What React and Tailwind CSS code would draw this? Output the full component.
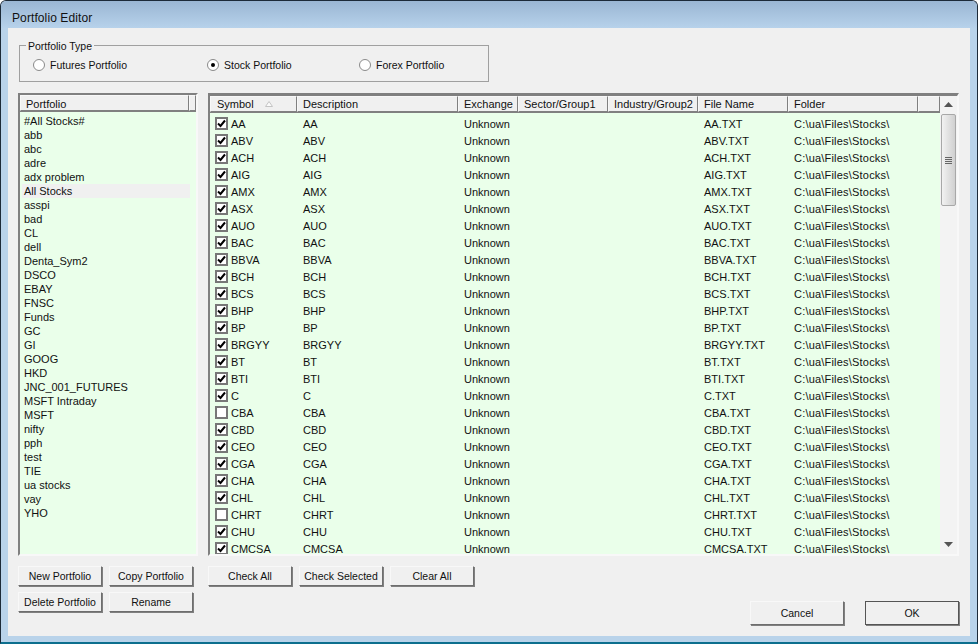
const portfolios = ['#All Stocks#', 'abb', 'abc', 'adre', 'adx problem', 'All Stocks', 'asspi', 'bad', 'CL', 'dell', 'Denta_Sym2', 'DSCO', 'EBAY', 'FNSC', 'Funds', 'GC', 'GI', 'GOOG', 'HKD', 'JNC_001_FUTURES', 'MSFT Intraday', 'MSFT', 'nifty', 'pph', 'test', 'TIE', 'ua stocks', 'vay', 'YHO'];

const symbols = ['AA', 'ABV', 'ACH', 'AIG', 'AMX', 'ASX', 'AUO', 'BAC', 'BBVA', 'BCH', 'BCS', 'BHP', 'BP', 'BRGYY', 'BT', 'BTI', 'C', 'CBA', 'CBD', 'CEO', 'CGA', 'CHA', 'CHL', 'CHRT', 'CHU', 'CMCSA'];
const unchecked = ['CBA', 'CHRT'];

const columns = [
  { label: 'Symbol', width: 'w-[87px] pl-[6px]' },
  { label: 'Description', width: 'w-[161px] pl-[5px]' },
  { label: 'Exchange', width: 'w-[60px] pl-[5px]' },
  { label: 'Sector/Group1', width: 'w-[90px] pl-[5px]' },
  { label: 'Industry/Group2', width: 'w-[90px] pl-[5px]' },
  { label: 'File Name', width: 'w-[90px] pl-[5px]' },
  { label: 'Folder', width: 'w-[130px] pl-[5px]' },
];

const raised = 'border border-t-[#f8f8f8] border-l-[#f8f8f8] border-r-[#808080] border-b-[#808080]';

function Radio({ label, checked, className }) {
  return (
    <label className={`flex items-center gap-[5px] ${className}`}>
      <span className="w-[12px] h-[12px] rounded-full bg-white border border-[#8a8a8a] flex items-center justify-center shrink-0">
        {checked && <span className="w-[4px] h-[4px] rounded-full bg-black" />}
      </span>
      {label}
    </label>
  );
}

function Button({ children, className = 'w-[84px] h-[20px]' }) {
  return (
    <button className={`${className} text-[10.5px] bg-[#f0f0f0] border border-t-[#f8f8f8] border-l-[#f8f8f8] border-r-[#6e6e6e] border-b-[#6e6e6e] shadow-[1px_1px_0_#808080] text-[#111]`}>
      {children}
    </button>
  );
}

function CheckBox({ checked }) {
  return (
    <span className="w-[13px] h-[13px] border-2 border-[#777] bg-white flex items-center justify-center shrink-0">
      {checked && (
        <svg width="9" height="9" viewBox="0 0 9 9">
          <path d="M1 4.5 L3.5 7 L8 1.5" fill="none" stroke="#000" strokeWidth="2" />
        </svg>
      )}
    </span>
  );
}

function Scrollbar() {
  return (
    <div className="w-[17px] flex flex-col bg-[#f3f3f3] shrink-0 pb-[1px]">
      <div className="h-[17px] flex items-center justify-center shrink-0">
        <svg width="9" height="5" viewBox="0 0 9 5"><path d="M4.5 0 L9 5 H0 Z" fill="#555" /></svg>
      </div>
      <div className="h-[92px] mt-[1px] mx-[1px] bg-gradient-to-r from-[#f2f2f2] to-[#d0d0d0] border border-[#a8a8a8] rounded-[2px] flex flex-col gap-[1px] items-center justify-center shrink-0">
        <span className="w-[7px] h-[1px] bg-[#666]" />
        <span className="w-[7px] h-[1px] bg-[#666]" />
        <span className="w-[7px] h-[1px] bg-[#666]" />
        <span className="w-[7px] h-[1px] bg-[#666]" />
      </div>
      <div className="flex-1" />
      <div className="h-[17px] flex items-center justify-center shrink-0">
        <svg width="9" height="5" viewBox="0 0 9 5"><path d="M0 0 H9 L4.5 5 Z" fill="#555" /></svg>
      </div>
    </div>
  );
}

export default function App() {
  return (
    <div className="w-[978px] h-[644px] overflow-hidden flex flex-col bg-[#b9d3ea] border border-[#1c2a38] border-b-2 border-b-[#0d6f8e] rounded-t-[6px] text-[11px] leading-[14px] text-[#111] font-['Liberation_Sans',sans-serif]">
      <div className="h-[27px] shrink-0 flex items-center pl-[11px] pt-[6px] text-[12px] tracking-[0.1px] bg-gradient-to-b from-[#9ab6d3] to-[#b7d2eb]">
        Portfolio Editor
      </div>

      <div className="flex-1 mx-[7px] mb-[6px] bg-[#f0f0f0] px-[10px] pt-[17px] flex flex-col">
        <div className="relative w-[470px] h-[37px] ml-[1px] border border-[#a0a0a0] flex items-center pt-[2px] pl-[13px] text-[10.5px]">
          <span className="absolute -top-[7px] left-[6px] bg-[#f0f0f0] px-[2px]">Portfolio Type</span>
          <Radio label="Futures Portfolio" className="w-[174px]" />
          <Radio label="Stock Portfolio" checked className="w-[152px]" />
          <Radio label="Forex Portfolio" />
        </div>

        <div className="flex gap-[10px] mt-[11px]">
          <div className="w-[180px] h-[463px] border-2 border-t-[#808080] border-l-[#808080] border-r-[#f8f8f8] border-b-[#f8f8f8] bg-[#eaffea] flex flex-col overflow-hidden">
            <div className="flex shrink-0 h-[17px] bg-[#f0f0f0] border-b border-[#808080]">
              <div className={`w-[169px] pl-[5px] pt-[1px] ${raised}`}>Portfolio</div>
              <div className={`flex-1 ${raised}`} />
            </div>
            <div className="pt-[2px] pl-[2px] pr-[6px]">
              {portfolios.map((name) => (
                <div key={name} className="h-[14px] pl-[2px] data-[on=true]:bg-[#f0f0f0]" data-on={name === 'All Stocks'}>
                  {name}
                </div>
              ))}
            </div>
          </div>

          <div className="w-[751px] h-[463px] border-2 border-t-[3px] border-t-[#808080] border-l-[#808080] border-r-[#f8f8f8] border-b-[#f8f8f8] bg-[#eaffea] flex overflow-hidden">
            <div className="flex-1 flex flex-col min-w-0">
              <div className="flex shrink-0 h-[17px] bg-[#f0f0f0] border-b border-[#808080]">
                {columns.map((col, i) => (
                  <div key={col.label} className={`${col.width} whitespace-nowrap overflow-hidden relative ${raised}`}>
                    {col.label}
                    {i === 0 && (
                      <svg className="absolute top-[4px] left-[54px]" width="8" height="6" viewBox="0 0 8 6"><path d="M4 0.5 L7.5 5.5 H0.5 Z" fill="#fafafa" stroke="#c4c4c4" /></svg>
                    )}
                  </div>
                ))}
                <div className={`flex-1 ${raised}`} />
              </div>
              <div className="flex-1 overflow-hidden pt-[2px]">
                {symbols.map((sym) => (
                  <div key={sym} className="h-[17px] flex items-center shrink-0 whitespace-nowrap">
                    <div className="w-[87px] flex items-center gap-[3px] pl-[5px]">
                      <CheckBox checked={!unchecked.includes(sym)} />
                      {sym}
                    </div>
                    <div className="w-[161px] pl-[6px]">{sym}</div>
                    <div className="w-[60px] pl-[6px]">Unknown</div>
                    <div className="w-[90px]" />
                    <div className="w-[90px]" />
                    <div className="w-[90px] pl-[6px]">{sym}.TXT</div>
                    <div className="w-[130px] pl-[6px] tracking-[0.2px]">C:\ua\Files\Stocks\</div>
                  </div>
                ))}
              </div>
            </div>
            <Scrollbar />
          </div>
        </div>

        <div className="flex mt-[10px]">
          <div className="w-[190px] grid grid-cols-[84px_84px] gap-x-[7px] gap-y-[6px] content-start">
            <Button>New Portfolio</Button>
            <Button>Copy Portfolio</Button>
            <Button>Delete Portfolio</Button>
            <Button>Rename</Button>
          </div>
          <div className="flex gap-[7px] items-start">
            <Button>Check All</Button>
            <Button>Check Selected</Button>
            <Button>Clear All</Button>
          </div>
          <div className="flex gap-[21px] ml-auto mt-[35px] mr-[1px] items-start">
            <Button className="w-[94px] h-[24px]">Cancel</Button>
            <Button className="w-[94px] h-[24px] outline outline-1 -outline-offset-1 outline-[#555]">OK</Button>
          </div>
        </div>
      </div>
    </div>
  );
}
